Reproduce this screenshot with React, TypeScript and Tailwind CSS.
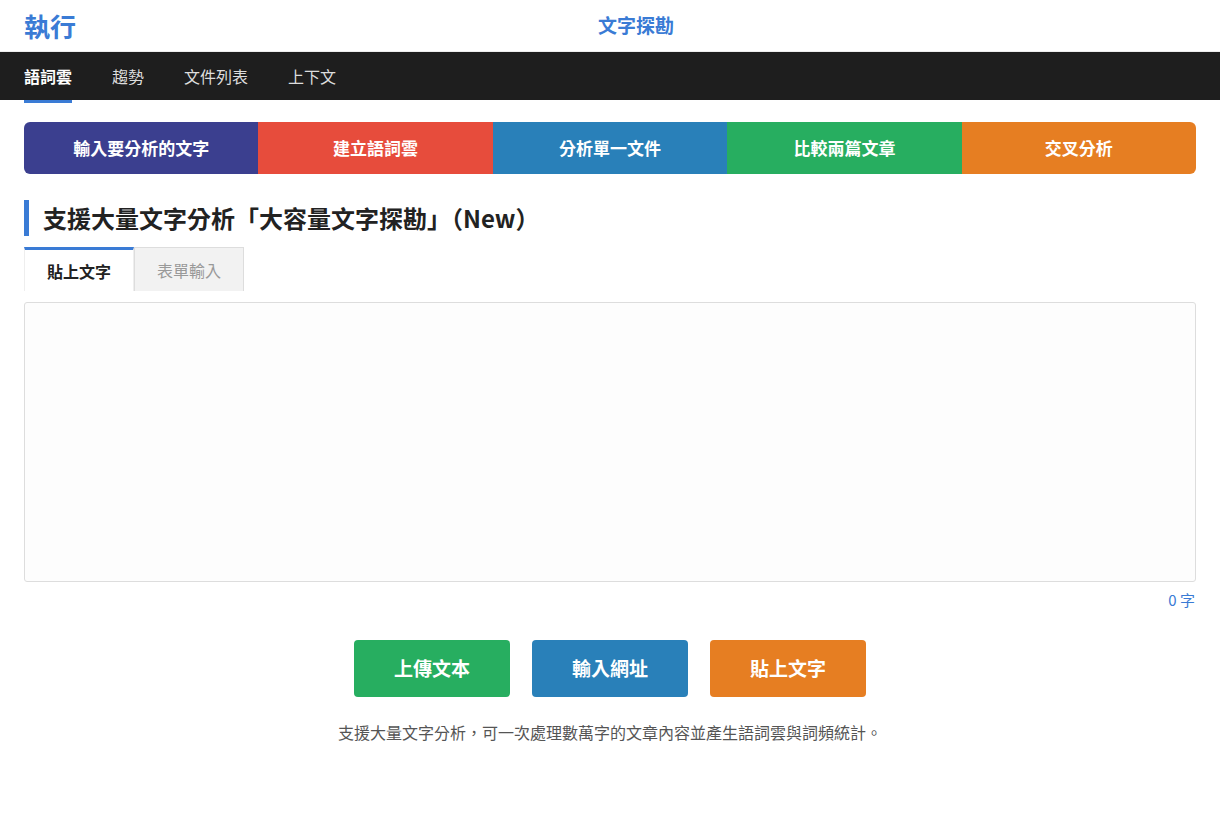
import { useState } from 'react'

const font = { fontFamily: '"Noto Sans CJK TC", "Noto Sans", sans-serif' }

const navItems = ['語詞雲', '趨勢', '文件列表', '上下文']

const steps = [
  { label: '輸入要分析的文字', className: 'bg-[#3b3f8f] rounded-l-md' },
  { label: '建立語詞雲', className: 'bg-[#e74c3c]' },
  { label: '分析單一文件', className: 'bg-[#2980b9]' },
  { label: '比較兩篇文章', className: 'bg-[#27ae60]' },
  { label: '交叉分析', className: 'bg-[#e67e22] rounded-r-md' },
]

const actions = [
  { label: '上傳文本', className: 'bg-[#27ae60]' },
  { label: '輸入網址', className: 'bg-[#2980b9]' },
  { label: '貼上文字', className: 'bg-[#e67e22]' },
]

export default function App() {
  const [tab, setTab] = useState(0)
  const [text, setText] = useState('')

  return (
    <div className="min-h-[825px] bg-white text-[#222]" style={font}>
      {/* Header */}
      <header className="h-[52px] px-6 flex items-center relative border-b border-[#eee]">
        <h1 className="text-[26px] font-bold text-[#3a7bd5] leading-none">執行</h1>
        <div className="absolute left-1/2 translate-x-[-12px] text-[19px] font-bold text-[#3a7bd5]">
          文字探勘
        </div>
      </header>

      {/* Nav */}
      <nav className="h-[48px] bg-[#1e1e1e] px-6 flex items-center gap-10">
        {navItems.map((item, i) => (
          <div key={item} className="relative h-full flex items-center">
            <span className={i === 0 ? 'text-[16px] font-bold text-white' : 'text-[16px] text-[#ddd]'}>
              {item}
            </span>
            {i === 0 && <div className="absolute left-0 right-0 -bottom-[3px] h-[3px] bg-[#3a7bd5]" />}
          </div>
        ))}
      </nav>

      <main className="px-6 pt-[22px]">
        {/* Steps */}
        <div className="grid grid-cols-5 h-[52px]">
          {steps.map((s) => (
            <div key={s.label} className={`flex items-center justify-center text-white font-bold text-[17px] ${s.className}`}>
              {s.label}
            </div>
          ))}
        </div>

        {/* Heading */}
        <h2 className="mt-[26px] h-[36px] border-l-[5px] border-[#3a7bd5] pl-[14px] flex items-center text-[24px] font-bold text-[#222]">
          支援大量文字分析「大容量文字探勘」（New）
        </h2>

        {/* Tabs */}
        <div className="mt-[11px] flex">
          {['貼上文字', '表單輸入'].map((t, i) => (
            <button
              key={t}
              onClick={() => setTab(i)}
              className={
                tab === i
                  ? 'w-[110px] h-[44px] bg-white border-t-[3px] border-t-[#3a7bd5] border-x border-x-[#eee] text-[16px] font-bold text-[#222]'
                  : 'w-[110px] h-[44px] bg-[#f2f2f2] border border-[#ddd] border-b-0 text-[16px] text-[#999]'
              }
            >
              {t}
            </button>
          ))}
        </div>

        {/* Textarea */}
        <textarea
          value={text}
          onChange={(e) => setText(e.target.value)}
          className="mt-[11px] block w-full h-[280px] border border-[#ddd] bg-[#fdfdfd] rounded-[3px] resize-none outline-none p-3 text-[15px]"
        />
        <div className="mt-[7px] text-right text-[15px] text-[#3a7bd5] pr-[1px]">{text.length} 字</div>

        {/* Actions */}
        <div className="mt-[28px] flex justify-center gap-[22px]">
          {actions.map((a) => (
            <button key={a.label} className={`w-[156px] h-[57px] rounded text-white font-bold text-[19px] ${a.className}`}>
              {a.label}
            </button>
          ))}
        </div>

        <p className="mt-[23px] text-center text-[16px] text-[#555]">
          支援大量文字分析，可一次處理數萬字的文章內容並產生語詞雲與詞頻統計。
        </p>
      </main>
    </div>
  )
}
